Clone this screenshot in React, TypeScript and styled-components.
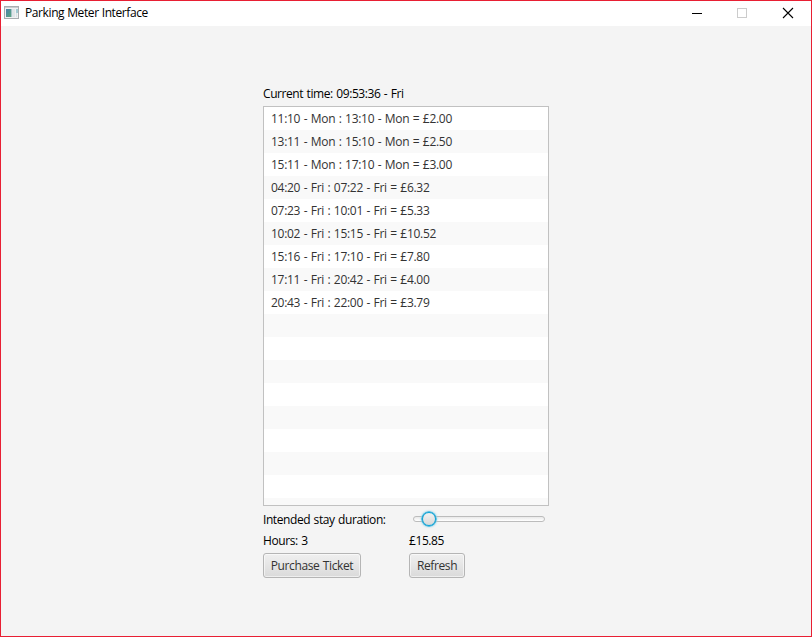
import React from "react";
import styled, { createGlobalStyle } from "styled-components";

const GlobalStyle = createGlobalStyle`
  * { box-sizing: border-box; }
  body { margin: 0; font-family: "Open Sans", "Noto Sans", sans-serif; font-size: 12px; color: #000; }
`;

const Window = styled.div`
  width: 812px;
  height: 637px;
  border: 1px solid #e81f33;
  background: #f4f4f4;
  display: flex;
  flex-direction: column;
  overflow: hidden;
`;

const TitleBar = styled.header`
  height: 25px;
  flex: none;
  background: #fff;
  display: flex;
  align-items: center;
  padding: 0 17px 1px 3px;
`;

const Title = styled.h1`
  margin: 0 auto 0 6px;
  font-size: 12px;
  font-weight: 400;
  line-height: 24px;
  letter-spacing: -0.4px;
  word-spacing: 0.3px;
  white-space: nowrap;
`;

const Controls = styled.div`
  display: grid;
  grid-template-columns: 45px 46px 12px;
  align-items: center;
`;

const ControlIcon = styled.svg`
  display: block;
`;

const Content = styled.main`
  width: 286px;
  margin: 57px 0 0 262px;
  display: flex;
  flex-direction: column;
`;

const Label = styled.span`
  line-height: 21px;
  letter-spacing: -0.42px;
  word-spacing: 0.75px;
  white-space: nowrap;
`;

const PriceList = styled.ul`
  list-style: none;
  margin: 2px 0 0;
  padding: 0;
  height: 400px;
  border: 1px solid #c1c1c1;
  background: #fff;
  overflow: hidden;
`;

const PriceRow = styled.li`
  height: 23px;
  padding-left: 7px;
  line-height: 23px;
  color: #333;
  white-space: pre;
  letter-spacing: -0.28px;
  word-spacing: 0.63px;
  &:nth-child(even) { background: #f9f9f9; }
`;

const Form = styled.div`
  display: grid;
  grid-template-columns: 146px 140px;
  grid-template-rows: 21px 21px 27px;
  margin-top: 3px;
  align-items: center;
`;

const Slider = styled.div`
  height: 16px;
  margin: -2px 4px 0;
  display: flex;
  align-items: center;
  position: relative;
`;

const Track = styled.div`
  width: 132px;
  height: 6px;
  border: 1px solid #bcbcbc;
  border-radius: 3px;
  background: linear-gradient(#e9e9e9, #fff);
`;

const Thumb = styled.div`
  position: absolute;
  left: 9px;
  top: 1px;
  width: 14px;
  height: 14px;
  border-radius: 50%;
  background: linear-gradient(#f2f2f2, #d8d8d8) padding-box;
  border: 1px solid #039ed3;
  box-shadow: 0 0 0 0.5px #039ed3, 0 0 2px 1px #8fd2e9;
`;

const Button = styled.button<{ $width: number }>`
  width: ${(p) => p.$width}px;
  height: 25px;
  align-self: end;
  padding: 1px 0 0;
  border: 1px solid #b5b5b5;
  border-radius: 3px;
  background: linear-gradient(#f0f0f0, #dadada);
  box-shadow: inset 0 0 0 1px rgba(255, 255, 255, 0.55);
  font: inherit;
  line-height: 22px;
  letter-spacing: -0.38px;
  word-spacing: 0.6px;
  color: #333;
  white-space: nowrap;
`;

const prices = [
  "11:10 - Mon : 13:10 - Mon = £2.00",
  "13:11 - Mon : 15:10 - Mon = £2.50",
  "15:11 - Mon : 17:10 - Mon = £3.00",
  "04:20 - Fri : 07:22 - Fri = £6.32",
  "07:23 - Fri : 10:01 - Fri = £5.33",
  "10:02 - Fri : 15:15 - Fri = £10.52",
  "15:16 - Fri : 17:10 - Fri = £7.80",
  "17:11 - Fri : 20:42 - Fri = £4.00",
  "20:43 - Fri : 22:00 - Fri = £3.79",
];
const rows = [...prices, ...Array<string>(9).fill("")];

function AppIcon() {
  return (
    <ControlIcon width="15" height="14" viewBox="0 0 15 14">
      <defs>
        <linearGradient id="pane" x1="0" y1="0" x2="1" y2="1">
          <stop offset="0" stopColor="#4a83ad" />
          <stop offset="1" stopColor="#5aa77c" />
        </linearGradient>
      </defs>
      <rect x="0.5" y="0.5" width="14" height="12" fill="#f0f1f2" stroke="#a9adb0" />
      <rect x="1" y="1" width="13" height="1" fill="#c8ccce" />
      <rect x="2" y="3" width="5" height="8" fill="url(#pane)" />
      <rect x="7" y="3" width="1" height="8" fill="#a8c4c8" />
      <rect x="8" y="3" width="3" height="8" fill="#dfe5e8" />
      <rect x="12" y="3" width="2" height="4" fill="#a2cad2" />
      <rect x="12" y="7" width="1" height="4" fill="#d5e2e4" />
    </ControlIcon>
  );
}

export default function App() {
  return (
    <>
      <GlobalStyle />
      <Window>
        <TitleBar>
          <AppIcon />
          <Title>Parking Meter Interface</Title>
          <Controls>
            <ControlIcon width="12" height="12" viewBox="0 0 12 12">
              <rect x="1" y="6" width="10" height="1" fill="#000" />
            </ControlIcon>
            <ControlIcon width="12" height="12" viewBox="0 0 12 12">
              <rect x="1.5" y="1.5" width="9" height="9" fill="none" stroke="#ccc" />
            </ControlIcon>
            <ControlIcon width="12" height="12" viewBox="0 0 12 12">
              <path d="M1 1 11 11M11 1 1 11" stroke="#000" strokeWidth="1.1" />
            </ControlIcon>
          </Controls>
        </TitleBar>
        <Content>
          <Label>Current time: 09:53:36 - Fri</Label>
          <PriceList>
            {rows.map((text, i) => (
              <PriceRow key={i}>{text}</PriceRow>
            ))}
          </PriceList>
          <Form>
            <Label>Intended stay duration:</Label>
            <Slider>
              <Track />
              <Thumb />
            </Slider>
            <Label>Hours: 3</Label>
            <Label>£15.85</Label>
            <Button $width={98}>Purchase Ticket</Button>
            <Button $width={56}>Refresh</Button>
          </Form>
        </Content>
      </Window>
    </>
  );
}
